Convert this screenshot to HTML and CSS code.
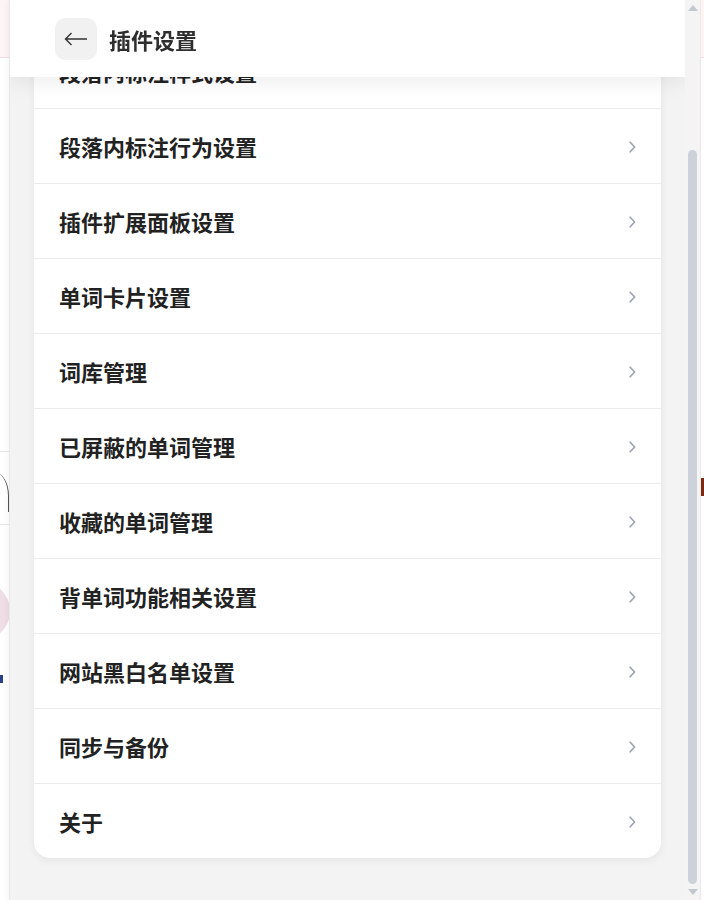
FILE: index.html
```html
<!DOCTYPE html>
<html lang="zh-CN">

<head>
    <meta charset="UTF-8">
    <title>插件设置</title>
    <link rel="stylesheet" href="styles.css">
</head>

<body>
    <div class="page">
        <!-- 背后网页露出的边缘 -->
        <div class="edge edge-left">
            <div class="edge-top"></div>
            <div class="edge-gap"></div>
            <div class="edge-band">
                <div class="edge-curve"></div>
            </div>
            <div class="edge-blob"></div>
            <div class="edge-text"></div>
        </div>

        <div class="panel">
            <div class="scroller" id="scroller">
                <div class="header">
                    <button class="back">
                        <svg width="24" height="14" viewBox="0 0 24 14">
                            <path d="M1.5 7H23 M7.5 1L1.5 7L7.5 13" fill="none" stroke="#333" stroke-width="1.4" />
                        </svg>
                    </button>
                    <span class="title">插件设置</span>
                </div>

                <div class="content">
                    <ul class="card">
                        <li class="item">段落内标注样式设置<svg class="chev" width="7" height="12" viewBox="0 0 7 12"><path d="M1.2 1.2L5.6 6L1.2 10.8" /></svg></li>
                        <li class="item">段落内标注行为设置<svg class="chev" width="7" height="12" viewBox="0 0 7 12"><path d="M1.2 1.2L5.6 6L1.2 10.8" /></svg></li>
                        <li class="item">插件扩展面板设置<svg class="chev" width="7" height="12" viewBox="0 0 7 12"><path d="M1.2 1.2L5.6 6L1.2 10.8" /></svg></li>
                        <li class="item">单词卡片设置<svg class="chev" width="7" height="12" viewBox="0 0 7 12"><path d="M1.2 1.2L5.6 6L1.2 10.8" /></svg></li>
                        <li class="item">词库管理<svg class="chev" width="7" height="12" viewBox="0 0 7 12"><path d="M1.2 1.2L5.6 6L1.2 10.8" /></svg></li>
                        <li class="item">已屏蔽的单词管理<svg class="chev" width="7" height="12" viewBox="0 0 7 12"><path d="M1.2 1.2L5.6 6L1.2 10.8" /></svg></li>
                        <li class="item">收藏的单词管理<svg class="chev" width="7" height="12" viewBox="0 0 7 12"><path d="M1.2 1.2L5.6 6L1.2 10.8" /></svg></li>
                        <li class="item">背单词功能相关设置<svg class="chev" width="7" height="12" viewBox="0 0 7 12"><path d="M1.2 1.2L5.6 6L1.2 10.8" /></svg></li>
                        <li class="item">网站黑白名单设置<svg class="chev" width="7" height="12" viewBox="0 0 7 12"><path d="M1.2 1.2L5.6 6L1.2 10.8" /></svg></li>
                        <li class="item">同步与备份<svg class="chev" width="7" height="12" viewBox="0 0 7 12"><path d="M1.2 1.2L5.6 6L1.2 10.8" /></svg></li>
                        <li class="item">关于<svg class="chev" width="7" height="12" viewBox="0 0 7 12"><path d="M1.2 1.2L5.6 6L1.2 10.8" /></svg></li>
                    </ul>
                </div>
            </div>

            <div class="scrollbar">
                <div class="arrow-up"></div>
                <div class="track">
                    <div class="thumb"></div>
                </div>
                <div class="arrow-down"></div>
            </div>
        </div>

        <div class="edge edge-right">
            <div class="edge-top"></div>
            <div class="edge-gap"></div>
            <div class="edge-mark"></div>
        </div>
    </div>

    <script>
        // 滚动到底部
        var oScroller = document.getElementById('scroller');
        oScroller.scrollTop = oScroller.scrollHeight;
    </script>
</body>

</html>
```

FILE: styles.css
```css
body,
html {
    margin: 0;
    height: 100%;
}

body {
    background-color: #fff;
    font-family: "Noto Sans CJK SC", "Noto Sans", sans-serif;
    color: #222;
}

ul {
    margin: 0;
    padding: 0;
    list-style-type: none;
}

.page {
    display: flex;
    height: 900px;
    overflow: hidden;
}

/* 边缘 */
.edge {
    display: flex;
    flex-direction: column;
    background-color: #fff;
    overflow: hidden;
}

.edge-left {
    width: 9px;
}

.edge-right {
    width: 4px;
    border-left: 1px solid #f0e6ea;
    box-sizing: border-box;
}

.edge-top {
    height: 57px;
    background-color: #fdf4f6;
    border-bottom: 1px solid #f1dde3;
}

.edge-gap {
    height: 393px;
}

.edge-band {
    height: 72px;
    border-top: 1px solid #e6e6e6;
    border-bottom: 1px solid #e6e6e6;
    overflow: hidden;
}

.edge-curve {
    width: 24px;
    height: 40px;
    margin: 20px 0 0 -16px;
    border-right: 1.5px solid #555;
    border-radius: 0 60% 0 0;
}

.edge-blob {
    width: 60px;
    height: 60px;
    margin: 56px 0 0 -50px;
    border-radius: 50%;
    background-color: #eedde5;
}

.edge-text {
    width: 3px;
    height: 8px;
    margin-top: 34px;
    background-color: #2b3e8c;
}

.edge-right .edge-gap {
    height: 420px;
}

.edge-mark {
    width: 3px;
    height: 18px;
    background-color: #7a2a12;
}

/* 面板 */
.panel {
    flex: 1;
    display: flex;
    background-color: #f3f3f3;
    border-left: 1px solid #ebe6e9;
    box-shadow: -2px 0 4px rgba(0, 0, 0, 0.04);
}

.scroller {
    flex: 1;
    height: 900px;
    overflow: hidden;
}

.header {
    position: sticky;
    top: 0;
    z-index: 1;
    display: flex;
    align-items: center;
    height: 77px;
    padding: 0 0 0 45px;
    box-sizing: border-box;
    background-color: #fff;
    box-shadow: 0 4px 20px rgba(0, 0, 0, 0.08);
}

.back {
    display: flex;
    align-items: center;
    justify-content: center;
    width: 42px;
    height: 42px;
    margin-top: 1px;
    padding: 0;
    border: none;
    border-radius: 10px;
    background-color: #f1f1f1;
}

.title {
    margin-left: 12px;
    font-size: 22px;
    font-weight: 700;
    color: #2e2e2e;
}

.content {
    padding: 16px 24px 42px;
}

.card {
    background-color: #fff;
    border-radius: 16px;
    box-shadow: 0 3px 8px rgba(0, 0, 0, 0.06);
    overflow: hidden;
}

.item {
    display: flex;
    align-items: center;
    justify-content: space-between;
    height: 75px;
    padding: 0 25px 0 25px;
    box-sizing: border-box;
    border-top: 1px solid #ececec;
    font-size: 22px;
    font-weight: 700;
}

.item:first-child {
    border-top: none;
}

.chev {
    margin-top: 1px;
}

.chev path {
    fill: none;
    stroke: #9ea5b1;
    stroke-width: 1.7;
    stroke-linecap: round;
    stroke-linejoin: round;
}

/* 滚动条 */
.scrollbar {
    display: flex;
    flex-direction: column;
    width: 15px;
    background-color: #f4f4f4;
}

.arrow-up,
.arrow-down {
    width: 0;
    height: 0;
    margin: 5px auto 0;
    border-left: 5px solid transparent;
    border-right: 5px solid transparent;
}

.arrow-up {
    border-bottom: 6px solid #c3c8d0;
    margin-bottom: 6px;
}

.arrow-down {
    border-top: 6px solid #c3c8d0;
    margin: 5px auto 5px;
}

.track {
    flex: 1;
    display: flex;
    padding: 133px 0 0 3px;
    box-sizing: border-box;
}

.thumb {
    width: 9px;
    height: 100%;
    border-radius: 5px;
    background-color: #cdd2da;
}
```
